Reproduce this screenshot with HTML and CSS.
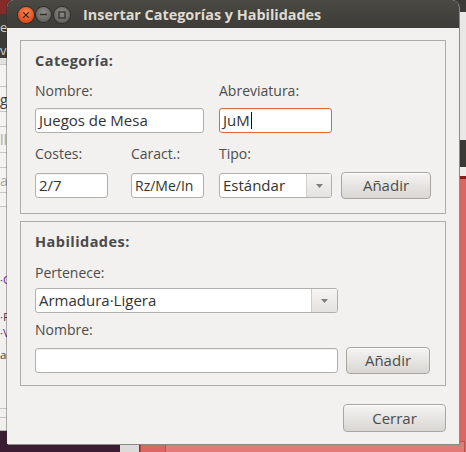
FILE: index.html
```html
<!DOCTYPE html>
<html lang="es">
<head>
<meta charset="utf-8">
<title>Insertar Categorías y Habilidades</title>
<link rel="stylesheet" href="styles.css">
</head>
<body>
<div class="desktop">
  <div class="bgwin bgwin-left">
    <div class="lw-top"></div>
    <div class="lw-title"><div>e</div><div>ve</div></div>
    <div class="lw-row lw-r0"></div>
    <div class="lw-row lw-r1"></div>
    <div class="lw-row lw-r2">gr</div>
    <div class="lw-row lw-r3"></div>
    <div class="lw-row lw-r4 dim">ll</div>
    <div class="lw-row lw-r5"></div>
    <div class="lw-row lw-r6 dim">a</div>
    <div class="lw-row lw-r7"></div>
    <div class="lw-list">
      <div class="li li-c"><span class="purple">·C</span></div>
      <div class="li li-f"><span class="purple">·</span>F</div>
      <div class="li li-v"><span class="purple">·V</span></div>
      <div class="li li-as">as</div>
    </div>
    <div class="lw-bottom1"></div>
    <div class="lw-bottom2"></div>
  </div>
  <div class="bgwin bgwin-right">
    <div class="rw-dark1"></div>
    <div class="rw-light1"></div>
    <div class="rw-dark2"></div>
    <div class="rw-light2"></div>
  </div>
  <div class="bgwin bgwin-grey"></div>
  <div class="bgwin bgwin-red"><div class="red-inner"></div></div>

  <div class="dialog">
    <div class="titlebar">
      <div class="wm-buttons">
        <span class="wm wm-close">
          <svg width="16" height="16" viewBox="0 0 16 16"><path d="M5.6 5.6 L10.4 10.4 M10.4 5.6 L5.6 10.4" stroke="#3a2018" stroke-width="1.3" fill="none" stroke-linecap="round"/></svg>
        </span>
        <span class="wm wm-min">
          <svg width="15" height="15" viewBox="0 0 15 15"><path d="M4 7.5 H11" stroke="#2f2e2b" stroke-width="1.4" fill="none"/></svg>
        </span>
        <span class="wm wm-max">
          <svg width="16" height="16" viewBox="0 0 16 16"><rect x="5" y="5" width="6" height="6" stroke="#2f2e2b" stroke-width="1.2" fill="none"/></svg>
        </span>
      </div>
      <div class="title">Insertar Categorías y Habilidades</div>
    </div>
    <div class="content">
      <div class="frame frame-cat">
        <div class="heading">Categoría:</div>
        <div class="row row-1">
          <div class="field f-nombre">
            <div class="label">Nombre:</div>
            <div class="entry">Juegos de Mesa</div>
          </div>
          <div class="field f-abrev">
            <div class="label">Abreviatura:</div>
            <div class="entry focus">JuM<span class="caret"></span></div>
          </div>
        </div>
        <div class="row row-2">
          <div class="field f-costes">
            <div class="label">Costes:</div>
            <div class="entry">2/7</div>
          </div>
          <div class="field f-caract">
            <div class="label">Caract.:</div>
            <div class="entry entry-tight">Rz/Me/In</div>
          </div>
          <div class="field f-tipo">
            <div class="label">Tipo:</div>
            <div class="combo">
              <span class="combo-text">Estándar</span>
              <span class="combo-arrow"><svg width="9" height="6" viewBox="0 0 9 6"><path d="M1 1 H8 L4.5 5 Z" fill="#7d7d7b"/></svg></span>
            </div>
          </div>
          <div class="button btn-add1">Añadir</div>
        </div>
      </div>

      <div class="frame frame-hab">
        <div class="heading">Habilidades:</div>
        <div class="label l-pertenece">Pertenece:</div>
        <div class="combo combo-wide">
          <span class="combo-text">Armadura·Ligera</span>
          <span class="combo-arrow"><svg width="9" height="6" viewBox="0 0 9 6"><path d="M1 1 H8 L4.5 5 Z" fill="#7d7d7b"/></svg></span>
        </div>
        <div class="label l-nombre2">Nombre:</div>
        <div class="row row-3">
          <div class="entry entry-wide"></div>
          <div class="button btn-add2">Añadir</div>
        </div>
      </div>

      <div class="footer">
        <div class="button btn-close">Cerrar</div>
      </div>
    </div>
  </div>
</div>
</body>
</html>
```

FILE: styles.css
```css
* { box-sizing: border-box; }
html, body { margin: 0; padding: 0; }
body {
  width: 466px;
  height: 452px;
  overflow: hidden;
  font-family: "Open Sans", "Noto Sans", "DejaVu Sans", sans-serif;
  background: #3b1d33;
}
.desktop {
  position: relative;
  width: 466px;
  height: 452px;
  overflow: hidden;
}

/* ---------- background windows ---------- */
.bgwin { position: absolute; overflow: hidden; }
.bgwin-left {
  left: 0; top: 0; width: 120px; height: 431px;
  background: #f1f0ee;
}
.lw-top { height: 14px; background: #842a28; }
.lw-title {
  height: 44px;
  background: #3c3b37;
  color: #d8d4cc;
  font-size: 13px;
  line-height: 23px;
  padding-top: 2px;
}
.lw-row {
  border-bottom: 1px solid #c9c7c3;
  display: flex;
  align-items: center;
  font-size: 14px;
  color: #3c3c3c;
  white-space: nowrap;
  background: #f4f3f1;
}
.lw-row.dim { color: #aaa8a4; }
.lw-r0 { height: 7px; background: #e3e2e0; }
.lw-r1 { height: 22px; }
.lw-r2 { height: 25px; }
.lw-r3 { height: 15px; }
.lw-r4 { height: 26px; }
.lw-r5 { height: 15px; }
.lw-r6 { height: 25px; }
.lw-r7 { height: 14px; }
.lw-list {
  height: 201px;
  padding-top: 65px;
  font-size: 11.5px;
  line-height: 16px;
  color: #3c3c3c;
}
.lw-list .li { white-space: nowrap; width: 20px; }
.li-f { margin-top: 21px; }
.li-as { margin-top: 6px; }
.purple { color: #6a2a8a; }
.lw-bottom1 { height: 9px; border-top: 1px solid #c8c6c2; }
.lw-bottom2 { height: 14px; border-top: 1px solid #c8c6c2; border-bottom: 1px solid #b8b6b2; }

.bgwin-right {
  left: 300px; top: 0; width: 166px; height: 176px;
  background: #e2e1df;
}
.rw-dark1 { height: 12px; background: #3c3b37; }
.rw-light1 { height: 128px; background: linear-gradient(90deg, #d6d5d3, #e9e8e6); }
.rw-dark2 { height: 27px; background: #3a3935; }
.rw-light2 { height: 9px; background: #eeedeb; }

.bgwin-grey {
  left: 120px; top: 431px; width: 20px; height: 21px;
  background: #dcdbd9;
  border-right: 1px solid #4a4945;
}
.bgwin-red {
  left: 140px; top: 176px; width: 326px; height: 276px;
  background: #dc6664;
  border-top: 3px solid #8c1c1c;
  border-left: 1px solid #b44644;
}
.red-inner {
  position: absolute;
  left: 24px; top: 262px;
  width: 300px; height: 20px;
  border: 1px solid #b85452;
  background: #e37a78;
}

/* ---------- dialog ---------- */
.dialog {
  position: absolute;
  left: 7px; top: 0;
  width: 452px; height: 444px;
  background: #f2f1f0;
  border-radius: 7px 7px 0 0;
  box-shadow: 1px 1px 0 #8c8a86, 0 0 0 1px rgba(40, 40, 40, 0.35);
  display: flex;
  flex-direction: column;
}
.titlebar {
  height: 28px;
  flex: none;
  background: linear-gradient(#4a4944, #3d3c38);
  border-radius: 7px 7px 0 0;
  display: flex;
  align-items: center;
}
.wm-buttons {
  display: flex;
  align-items: center;
  padding-left: 11px;
  height: 28px;
  padding-top: 1px;
}
.wm {
  display: flex;
  align-items: center;
  justify-content: center;
  border-radius: 50%;
  box-shadow: 0 0 0 1px #2e2d29;
}
.wm-close {
  width: 16px; height: 16px;
  background: radial-gradient(circle at 50% 35%, #f78a5c, #e6541f 60%, #c2411a);
}
.wm-min {
  width: 15px; height: 15px;
  margin-left: 2px;
  background: radial-gradient(circle at 50% 35%, #8c8a84, #6a6862 65%, #55534e);
}
.wm-max {
  width: 16px; height: 16px;
  margin-left: 3px;
  background: radial-gradient(circle at 50% 35%, #8c8a84, #6a6862 65%, #55534e);
}
.title {
  margin-left: 13px;
  color: #dfdbd2;
  font-weight: bold;
  font-size: 14.4px;
  white-space: nowrap;
  padding-top: 1px;
}

.content {
  flex: 1;
  padding: 12px 13px 0 13px;
  display: flex;
  flex-direction: column;
}
.frame {
  border: 1px solid #aeaca8;
  padding-left: 14px;
}
.frame-cat { height: 174px; }
.frame-hab { height: 165px; margin-top: 7px; }

.heading {
  font-weight: bold;
  font-size: 14.5px;
  letter-spacing: 0.45px;
  line-height: 18px;
  color: #4a4a4a;
  margin-top: 11px;
}
.label {
  font-size: 14px;
  line-height: 18px;
  color: #4c4c4c;
  white-space: nowrap;
}

.row { display: flex; align-items: flex-end; }
.row-1 { margin-top: 12px; }
.row-2 { margin-top: 12px; }
.field .label { margin-bottom: 8px; }
.row-2 .field .label { margin-bottom: 10px; }

.entry {
  height: 25px;
  background: #ffffff;
  border: 1px solid #b2b0ac;
  border-radius: 3px;
  box-shadow: inset 0 1px 1px rgba(0,0,0,0.06);
  font-size: 15px;
  line-height: 23px;
  color: #333333;
  padding-left: 3px;
  white-space: nowrap;
  overflow: hidden;
}
.entry-tight { font-size: 14px; }
.entry.focus {
  border-color: #e2643a;
  display: flex;
  align-items: center;
}
.caret {
  display: inline-block;
  width: 1px;
  height: 17px;
  background: #111;
  margin-left: 1px;
}
.f-nombre { width: 169px; }
.f-abrev { width: 113px; margin-left: 15px; }
.f-costes { width: 73px; }
.f-caract { width: 73px; margin-left: 23px; }
.f-tipo { width: 113px; margin-left: 15px; }

.combo {
  height: 25px;
  display: flex;
  background: #ffffff;
  border: 1px solid #b2b0ac;
  border-radius: 3px;
  overflow: hidden;
}
.combo-text {
  flex: 1;
  font-size: 15px;
  line-height: 23px;
  color: #333333;
  padding-left: 3px;
  white-space: nowrap;
}
.combo-arrow {
  width: 25px;
  border-left: 1px solid #cfcdc9;
  background: linear-gradient(#f6f5f4, #e3e2df);
  display: flex;
  align-items: center;
  justify-content: center;
}
.combo-arrow svg { margin-top: 1px; }

.button {
  height: 27px;
  border: 1px solid #a9a6a0;
  border-radius: 4px;
  background: linear-gradient(#f5f4f3, #e6e5e2 50%, #d9d7d3);
  box-shadow: inset 0 1px 0 #ffffff;
  font-size: 15px;
  line-height: 25px;
  color: #4c4c4c;
  text-align: center;
}
.btn-add1 { width: 90px; margin-left: 9px; margin-bottom: -1px; }

.l-pertenece { margin-top: 13px; }
.combo-wide { width: 303px; margin-top: 6px; }
.combo-wide .combo-arrow { width: 26px; }
.l-nombre2 { margin-top: 8px; }
.row-3 { margin-top: 8px; align-items: center; }
.entry-wide { width: 303px; }
.btn-add2 { width: 84px; margin-left: 8px; }

.footer {
  display: flex;
  justify-content: flex-end;
  margin-top: 18px;
}
.btn-close { width: 103px; height: 28px; line-height: 26px; }
```
